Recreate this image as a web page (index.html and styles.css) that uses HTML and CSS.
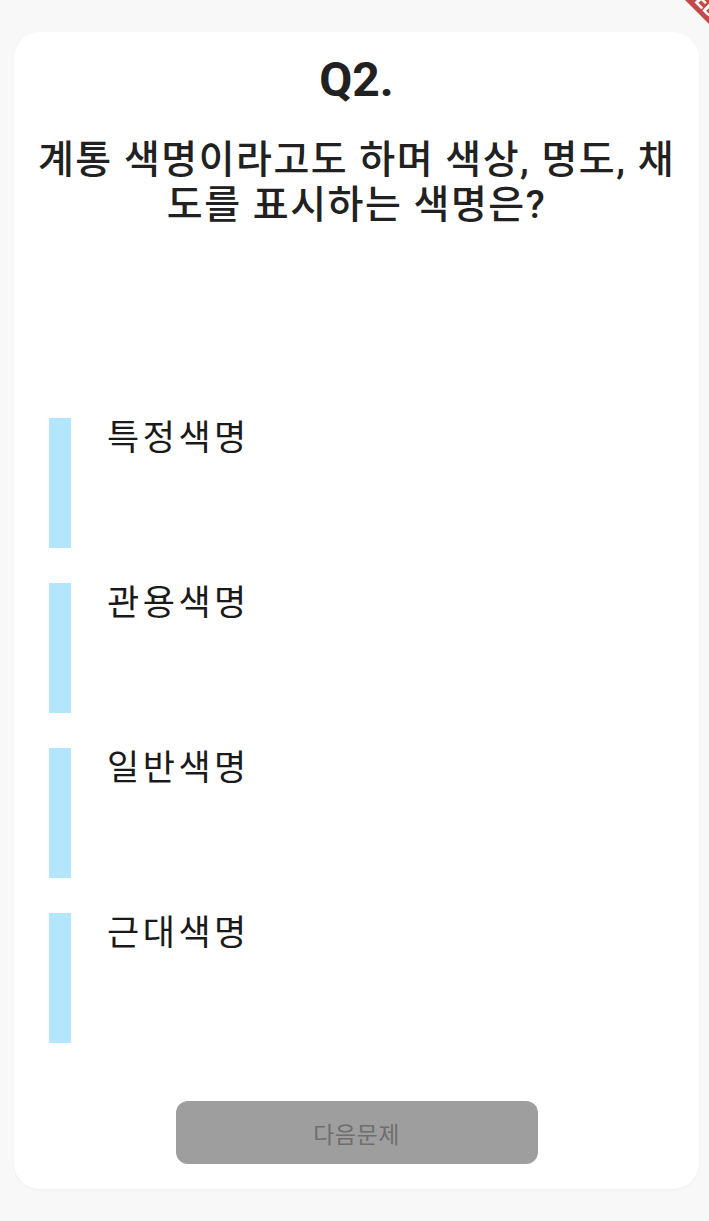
FILE: index.html
```html
<html lang="ko">
<head>
    <meta charset="UTF-8">
    <meta name="viewport" content="width=device-width, initial-scale=1.0">
    <title>Q2</title>
    <link rel="stylesheet" href="styles.css">
</head>
<body>
    <div class="card">
        <h1 class="q-num">Q2.</h1>
        <p class="q-text">계통 색명이라고도 하며 색상, 명도, 채<br>도를 표시하는 색명은?</p>

        <ul class="options">
            <li class="option"><span class="bar"></span><span class="label">특정색명</span></li>
            <li class="option"><span class="bar"></span><span class="label">관용색명</span></li>
            <li class="option"><span class="bar"></span><span class="label">일반색명</span></li>
            <li class="option"><span class="bar"></span><span class="label">근대색명</span></li>
        </ul>

        <button class="next-btn" disabled>다음문제</button>
    </div>

    <!-- 디버그 배너 -->
    <div class="debug-banner">DEBUG</div>
</body>
</html>
```

FILE: styles.css
```css
body {
    margin: 0;
    padding: 0;
    background-color: #f8f8f8;
    font-family: 'Roboto', 'Noto Sans CJK KR', sans-serif;
    overflow: hidden;
    height: 1221px;
    position: relative;
}

.card {
    margin: 32px 10px 0 14px;
    padding: 20px 0 25px;
    background-color: #fff;
    border-radius: 26px;
    box-shadow: 0 1px 3px rgba(0, 0, 0, 0.04);
    text-align: center;
}

.q-num {
    margin: 0;
    font-family: 'Roboto', sans-serif;
    font-size: 48px;
    font-weight: bold;
    line-height: 56px;
    color: #212121;
}

.q-text {
    margin: 30px 0 0;
    font-family: 'Roboto', 'Noto Sans CJK KR', sans-serif;
    font-size: 39px;
    font-weight: 500;
    line-height: 45px;
    letter-spacing: 1.5px;
    color: #212121;
}

.options {
    list-style: none;
    margin: 190px 0 0;
    padding: 0 0 0 35px;
    display: flex;
    flex-direction: column;
    gap: 35px;
    text-align: left;
}

.option {
    display: flex;
    align-items: flex-start;
    height: 130px;
}

.bar {
    width: 22px;
    height: 130px;
    background-color: #b3e5fc;
    flex-shrink: 0;
}

.label {
    margin-left: 36px;
    font-family: 'Noto Sans CJK KR', sans-serif;
    font-size: 35px;
    line-height: 34px;
    letter-spacing: 3.5px;
    color: #1a1a1a;
}

.next-btn {
    display: block;
    margin: 58px auto 0;
    width: 362px;
    height: 63px;
    border: none;
    border-radius: 12px;
    background-color: #9e9e9e;
    color: #6e6e6e;
    font-family: 'Noto Sans CJK KR', sans-serif;
    font-size: 23px;
    letter-spacing: 0.5px;
}

.debug-banner {
    position: absolute;
    left: 632px;
    top: -2px;
    width: 160px;
    height: 24px;
    line-height: 24px;
    transform: rotate(45deg);
    background-color: rgba(183, 28, 28, 0.8);
    color: #fff;
    font-family: 'Roboto', sans-serif;
    font-size: 20px;
    font-weight: bold;
    text-align: center;
}
```
